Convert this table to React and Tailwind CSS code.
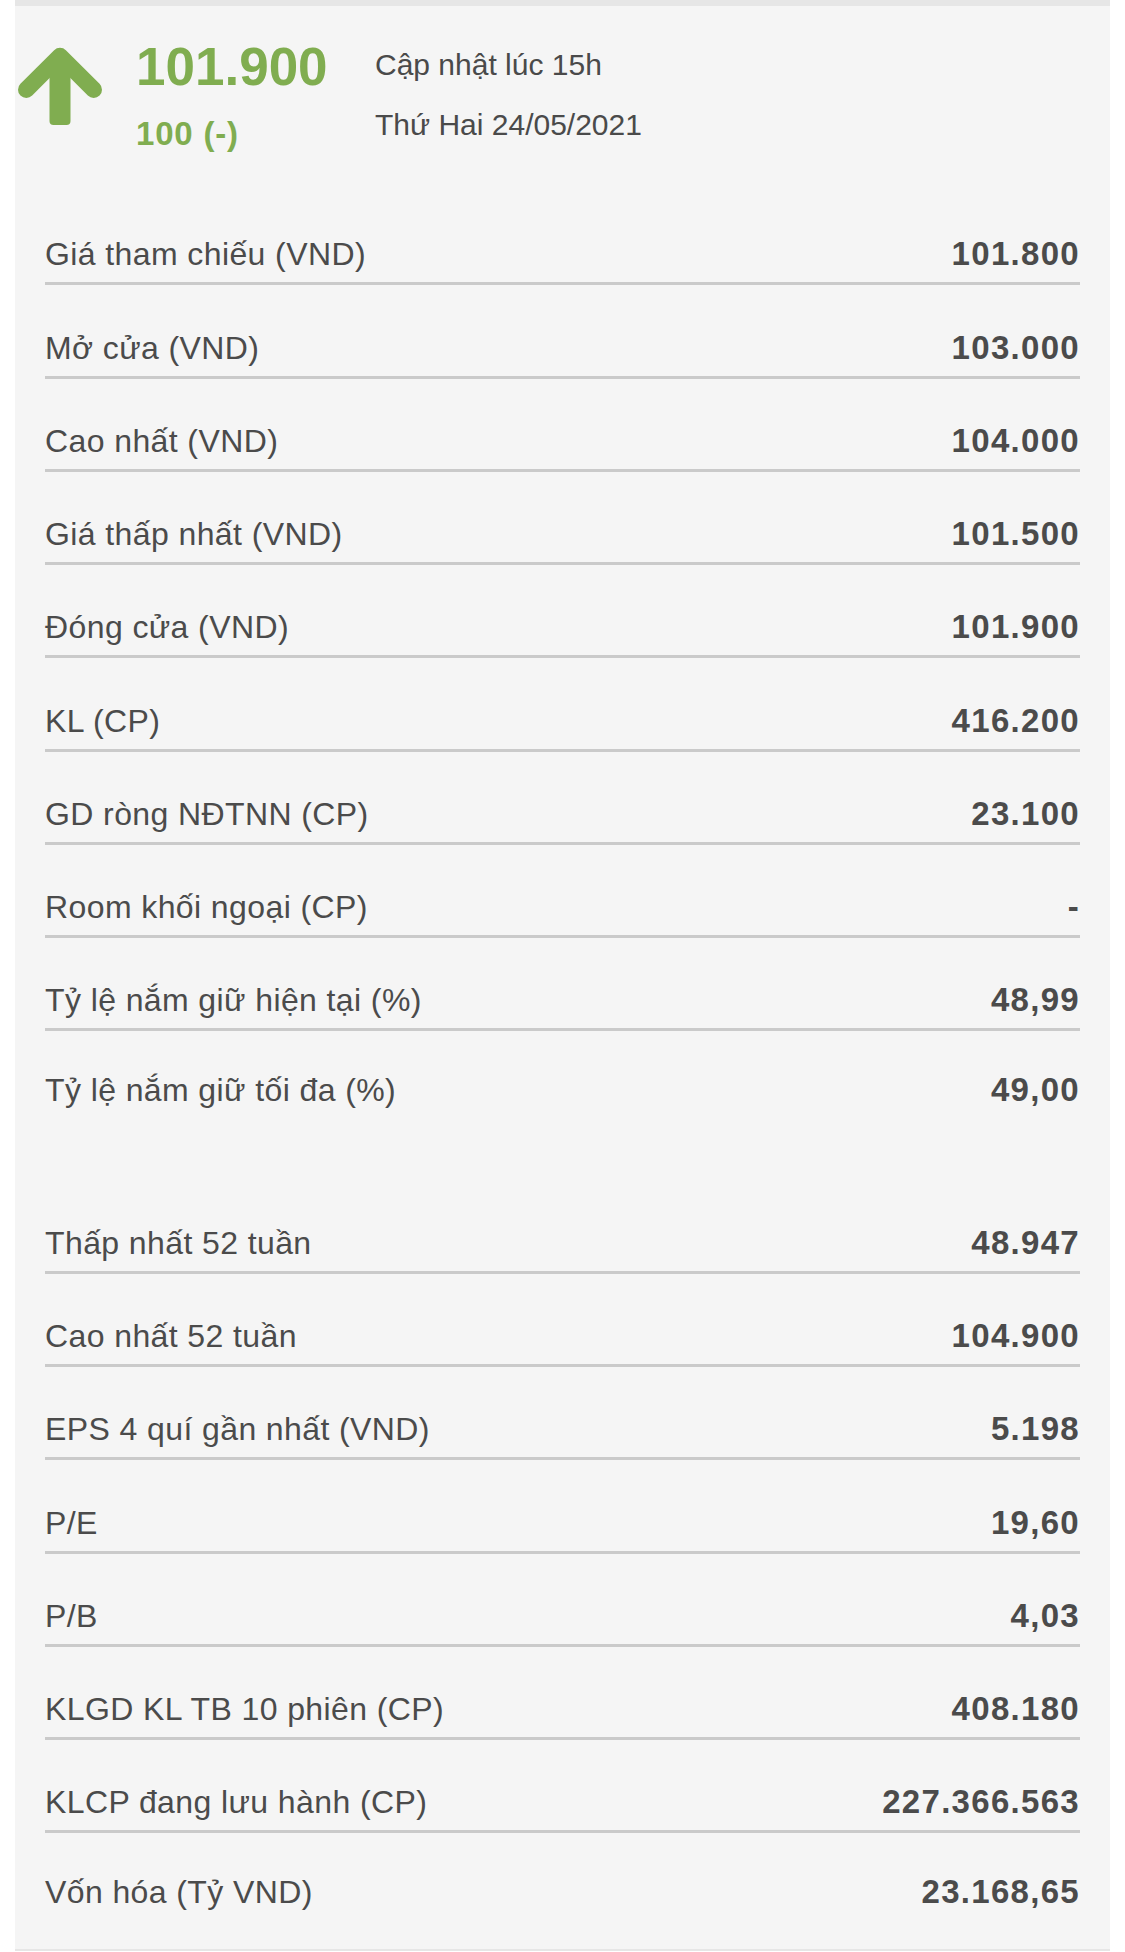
const mainRows = [
  ['Giá tham chiếu (VND)', '101.800'],
  ['Mở cửa (VND)', '103.000'],
  ['Cao nhất (VND)', '104.000'],
  ['Giá thấp nhất (VND)', '101.500'],
  ['Đóng cửa (VND)', '101.900'],
  ['KL (CP)', '416.200'],
  ['GD ròng NĐTNN (CP)', '23.100'],
  ['Room khối ngoại (CP)', '-'],
  ['Tỷ lệ nắm giữ hiện tại (%)', '48,99'],
  ['Tỷ lệ nắm giữ tối đa (%)', '49,00'],
];

const yearRows = [
  ['Thấp nhất 52 tuần', '48.947'],
  ['Cao nhất 52 tuần', '104.900'],
  ['EPS 4 quí gần nhất (VND)', '5.198'],
  ['P/E', '19,60'],
  ['P/B', '4,03'],
  ['KLGD KL TB 10 phiên (CP)', '408.180'],
  ['KLCP đang lưu hành (CP)', '227.366.563'],
  ['Vốn hóa (Tỷ VND)', '23.168,65'],
];

function UpArrow() {
  return (
    <svg width="84" height="80" viewBox="0 0 84 80" className="mt-[5px] shrink-0">
      <polyline
        points="8.3,44.7 42,11 75.7,44.7"
        fill="none"
        stroke="#80ad50"
        strokeWidth="16.6"
        strokeLinecap="round"
        strokeLinejoin="round"
      />
      <rect x="31.5" y="15" width="21" height="65" rx="4" fill="#80ad50" />
    </svg>
  );
}

function Row({ label, value, last }) {
  return (
    <div
      className={`flex h-[93.25px] items-end justify-between border-b-[3px] ${
        last ? 'border-transparent pb-[13px]' : 'border-[#cacaca] pb-[9px]'
      }`}
    >
      <span className="text-[32px] leading-[38px] tracking-[0.4px] text-[#4b4b4b]">{label}</span>
      <span className="text-[33px] leading-[38px] font-bold tracking-[1.3px] text-[#4b4b4b]">
        {value}
      </span>
    </div>
  );
}

export default function App() {
  return (
    <div className="min-h-screen bg-white font-['Liberation_Sans',Arial,sans-serif]">
      <div className="mx-[15px] w-[1095px] border-t-[6px] border-b-2 border-[#e6e6e6] bg-[#f5f5f5]">
        {/* Header: price + update time */}
        <div className="flex h-[186px] pl-[3px] pt-[34px]">
          <UpArrow />
          <div className="ml-[34px] flex w-[239px] flex-col text-[#80ad50] font-bold">
            <span className="text-[53px] leading-[53px]">101.900</span>
            <span className="mt-[24px] text-[33px] leading-[33px] tracking-[0.8px]">100 (-)</span>
          </div>
          <div className="-mt-[5px] flex flex-col text-[30px] leading-[60px] text-[#4a4a4a]">
            <span>Cập nhật lúc 15h</span>
            <span>Thứ Hai 24/05/2021</span>
          </div>
        </div>

        <div className="px-[30px]">
          {mainRows.map(([label, value], i) => (
            <Row key={label} label={label} value={value} last={i === mainRows.length - 1} />
          ))}
        </div>

        <div className="h-[56px]" />

        <div className="px-[30px] pb-[22px]">
          {yearRows.map(([label, value], i) => (
            <Row key={label} label={label} value={value} last={i === yearRows.length - 1} />
          ))}
        </div>
      </div>
    </div>
  );
}
